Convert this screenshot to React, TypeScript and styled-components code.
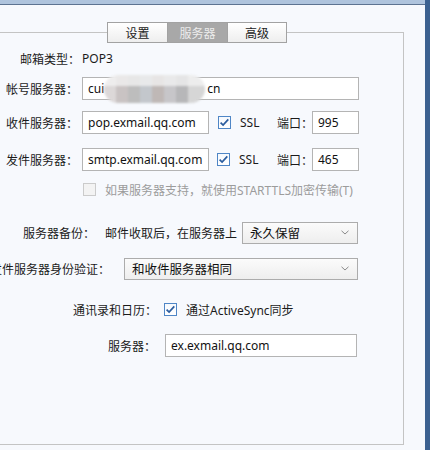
import React from "react";
import styled, { createGlobalStyle } from "styled-components";

const Global = createGlobalStyle`
  html, body { margin: 0; padding: 0; background: #f7f9fd; }
  body {
    font-family: "Noto Sans", "Noto Sans CJK SC", sans-serif;
    font-size: 12px;
    color: #1b1b1b;
    overflow: hidden;
  }
`;

const Window = styled.div`
  display: flex;
  width: 430px;
  height: 450px;
  overflow: hidden;
`;

const Main = styled.div`
  flex: 1;
  display: flex;
  flex-direction: column;
  background: #f7f9fd;
`;

const TitleStrip = styled.div`
  height: 4px;
  background: #afc4dd;
  border-bottom: 1px solid #5d7391;
  flex-shrink: 0;
`;

const RightEdge = styled.div`
  width: 5px;
  background: #3c6190;
  flex-shrink: 0;
`;

const Body = styled.div`
  padding-top: 17px;
  display: flex;
  flex-direction: column;
`;

const TabBar = styled.div`
  display: flex;
  margin-left: 107px;
  position: relative;
  z-index: 1;
  height: 21px;
`;

const Tab = styled.div<{ $active?: boolean; $w: number }>`
  width: ${(p) => p.$w}px;
  height: 21px;
  box-sizing: border-box;
  border: 1px solid #a2a2a2;
  margin-left: -1px;
  display: flex;
  align-items: center;
  justify-content: center;
  font-size: 12px;
  color: ${(p) => (p.$active ? "#ececec" : "#222")};
  background: ${(p) =>
    p.$active ? "#a8a8a8" : "linear-gradient(#ffffff, #eeeeee)"};
  &:first-child { margin-left: 0; }
`;

const GroupBox = styled.div`
  margin-top: -11px;
  margin-left: -1px;
  width: 405px;
  height: 413px;
  box-sizing: border-box;
  border: 1px solid #c4c4c4;
  display: flex;
  flex-direction: column;
  padding-top: 14px;
`;

const Row = styled.div<{ $mt: number }>`
  display: flex;
  align-items: center;
  height: 23px;
  margin-top: ${(p) => p.$mt}px;
  white-space: nowrap;
  flex-shrink: 0;
`;

const Label = styled.div<{ $end: number }>`
  width: ${(p) => p.$end}px;
  display: flex;
  justify-content: flex-end;
  flex-shrink: 0;
  white-space: nowrap;
  color: #1b1b1b;
`;

const Value = styled.span<{ $ml: number }>`
  margin-left: ${(p) => p.$ml}px;
`;

const TextBox = styled.div<{ $ml: number; $w: number }>`
  margin-left: ${(p) => p.$ml}px;
  width: ${(p) => p.$w}px;
  height: 23px;
  box-sizing: border-box;
  border: 1px solid #b4b4b4;
  background: #ffffff;
  display: flex;
  align-items: center;
  padding: 0 5px;
  font-size: 12px;
  color: #111;
  flex-shrink: 0;
  overflow: visible;
`;

const Blur = styled.span`
  display: inline-block;
  position: relative;
  width: 101px;
  height: 28px;
  margin-right: 2px;
  border-radius: 14px;
  filter: blur(1.2px);
  background:
    linear-gradient(rgba(245, 245, 245, 0.75) 0 40%, rgba(255, 255, 255, 0) 40% 100%),
    linear-gradient(
      90deg,
      #dcd8d8 0 12px,
      #c9c3c3 12px 24px,
      #bdbdbd 24px 36px,
      #c3c7cc 36px 48px,
      #bfb8b6 48px 60px,
      #c7c6c9 60px 72px,
      #b7b7b9 72px 84px,
      #d6d6d6 84px 101px
    );
`;

const Check = styled.span<{ $ml: number; $disabled?: boolean }>`
  margin-left: ${(p) => p.$ml}px;
  width: 13px;
  height: 13px;
  box-sizing: border-box;
  border: 1px solid ${(p) => (p.$disabled ? "#cbcbcb" : "#4f86c6")};
  background: ${(p) => (p.$disabled ? "#f3f3f3" : "linear-gradient(#f6f9fd, #ffffff)")};
  display: flex;
  align-items: center;
  justify-content: center;
  flex-shrink: 0;
`;

const Text = styled.span<{ $ml: number; $w?: number; $muted?: boolean }>`
  margin-left: ${(p) => p.$ml}px;
  ${(p) => (p.$w ? `width: ${p.$w}px;` : "")}
  color: ${(p) => (p.$muted ? "#9c9c9c" : "#1b1b1b")};
  flex-shrink: 0;
`;

const Select = styled.div<{ $ml: number; $w: number }>`
  margin-left: ${(p) => p.$ml}px;
  width: ${(p) => p.$w}px;
  height: 22px;
  box-sizing: border-box;
  border: 1px solid #acacac;
  background: linear-gradient(#fbfbfb, #eeeeee);
  display: flex;
  align-items: center;
  justify-content: space-between;
  padding: 0 8px 0 7px;
  font-size: 12.5px;
  color: #111;
  flex-shrink: 0;
`;

const CheckMark = () => (
  <svg width="11" height="11" viewBox="0 0 11 11">
    <path d="M1.6 5.6 L4.1 8.1 L9.3 2.4" fill="none" stroke="#2a5c9e" strokeWidth="1.7" />
  </svg>
);

const Chevron = () => (
  <svg width="8" height="5" viewBox="0 0 8 5">
    <path d="M0.5 0.8 L4 4 L7.5 0.8" fill="none" stroke="#8a8a8a" strokeWidth="1" />
  </svg>
);

export default function App() {
  return (
    <>
      <Global />
      <Window>
        <Main>
          <TitleStrip />
          <Body>
            <TabBar>
              <Tab $w={61}>设置</Tab>
              <Tab $w={61} $active>服务器</Tab>
              <Tab $w={60}>高级</Tab>
            </TabBar>
            <GroupBox>
              <Row $mt={0}>
                <Label $end={80}>邮箱类型：</Label>
                <Value $ml={2}>POP3</Value>
              </Row>
              <Row $mt={7}>
                <Label $end={78}>帐号服务器：</Label>
                <TextBox $ml={4} $w={277}>
                  cui
                  <Blur />
                  cn
                </TextBox>
              </Row>
              <Row $mt={11}>
                <Label $end={78}>收件服务器：</Label>
                <TextBox $ml={4} $w={127}>pop.exmail.qq.com</TextBox>
                <Check $ml={9}>
                  <CheckMark />
                </Check>
                <Text $ml={9} $w={37}>SSL</Text>
                <Text $ml={0} $w={35}>端口：</Text>
                <TextBox $ml={0} $w={47}>995</TextBox>
              </Row>
              <Row $mt={14}>
                <Label $end={78}>发件服务器：</Label>
                <TextBox $ml={4} $w={127}>smtp.exmail.qq.com</TextBox>
                <Check $ml={8}>
                  <CheckMark />
                </Check>
                <Text $ml={9} $w={38}>SSL</Text>
                <Text $ml={0} $w={35}>端口：</Text>
                <TextBox $ml={0} $w={47}>465</TextBox>
              </Row>
              <Row $mt={7}>
                <Check $ml={83} $disabled />
                <Text $ml={9} $muted>
                  如果服务器支持，就使用STARTTLS加密传输(T)
                </Text>
              </Row>
              <Row $mt={20}>
                <Label $end={95}>服务器备份：</Label>
                <Text $ml={10} $w={137}>邮件收取后，在服务器上</Text>
                <Select $ml={0} $w={116}>
                  永久保留
                  <Chevron />
                </Select>
              </Row>
              <Row $mt={13}>
                <Label $end={110}>发件服务器身份验证：</Label>
                <Select $ml={14} $w={234}>
                  和收件服务器相同
                  <Chevron />
                </Select>
              </Row>
              <Row $mt={18}>
                <Label $end={157}>通讯录和日历：</Label>
                <Check $ml={7}>
                  <CheckMark />
                </Check>
                <Text $ml={9}>通过ActiveSync同步</Text>
              </Row>
              <Row $mt={13}>
                <Label $end={156}>服务器：</Label>
                <TextBox $ml={9} $w={192}>ex.exmail.qq.com</TextBox>
              </Row>
            </GroupBox>
          </Body>
        </Main>
        <RightEdge />
      </Window>
    </>
  );
}
